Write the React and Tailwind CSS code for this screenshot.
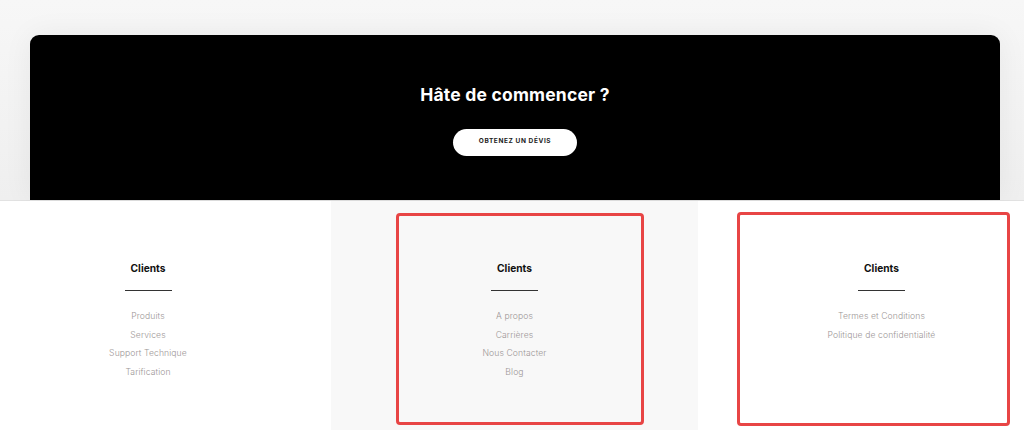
import React from "react";

const font = { fontFamily: "Inter, 'Noto Sans', 'Liberation Sans', sans-serif" };

function Col({ links }) {
  return (
    <div className="flex flex-col items-center">
      <h3 className="text-[10.2px] font-bold text-[#111] leading-none mt-[62px]">Clients</h3>
      <div className="w-[47px] h-px bg-[#333] mt-[17px]" />
      <ul className="mt-[19px] flex flex-col items-center gap-[6px]">
        {links.map((l) => (
          <li key={l} className="text-[8.6px] leading-[12.5px] text-[#9c9696] font-light tracking-[0.1px]">
            {l}
          </li>
        ))}
      </ul>
    </div>
  );
}

export default function App() {
  return (
    <div className="w-[1024px] h-[430px] overflow-hidden bg-white" style={font}>
      <div className="bg-gradient-to-b from-[#f7f7f7] to-[#efefef] pt-[35px] pl-[30px] pr-[24px] h-[200px] flex">
        <div className="flex-1 bg-black rounded-t-[9px] flex flex-col items-center shadow-[0_0_30px_rgba(0,0,0,0.06)]">
          <h2 className="text-white font-bold text-[17.5px] leading-none mt-[51px] tracking-[0.2px]">
            Hâte de commencer ?
          </h2>
          <button className="mt-[25px] w-[124px] h-[27px] rounded-full bg-white text-[6.5px] font-bold tracking-[0.6px] text-[#222] flex items-center justify-center">
            OBTENEZ UN DÉVIS
          </button>
        </div>
      </div>
      <div className="grid grid-cols-[331px_367px_1fr] h-[230px] border-t border-[#e2e2e2]">
        <div className="bg-white pr-[35px]">
          <Col links={["Produits", "Services", "Support Technique", "Tarification"]} />
        </div>
        <div className="bg-[#f8f8f8] relative">
          <Col links={["A propos", "Carrières", "Nous Contacter", "Blog"]} />
          <div className="absolute left-[65px] top-[12px] w-[248px] h-[212px] border-[3px] border-[#e84545] rounded-[4px]" />
        </div>
        <div className="bg-white pl-[41px] relative">
          <Col links={["Termes et Conditions", "Politique de confidentialité"]} />
          <div className="absolute left-[39px] top-[11px] w-[273px] h-[214px] border-[3px] border-[#e84545] rounded-[4px]" />
        </div>
      </div>
    </div>
  );
}
